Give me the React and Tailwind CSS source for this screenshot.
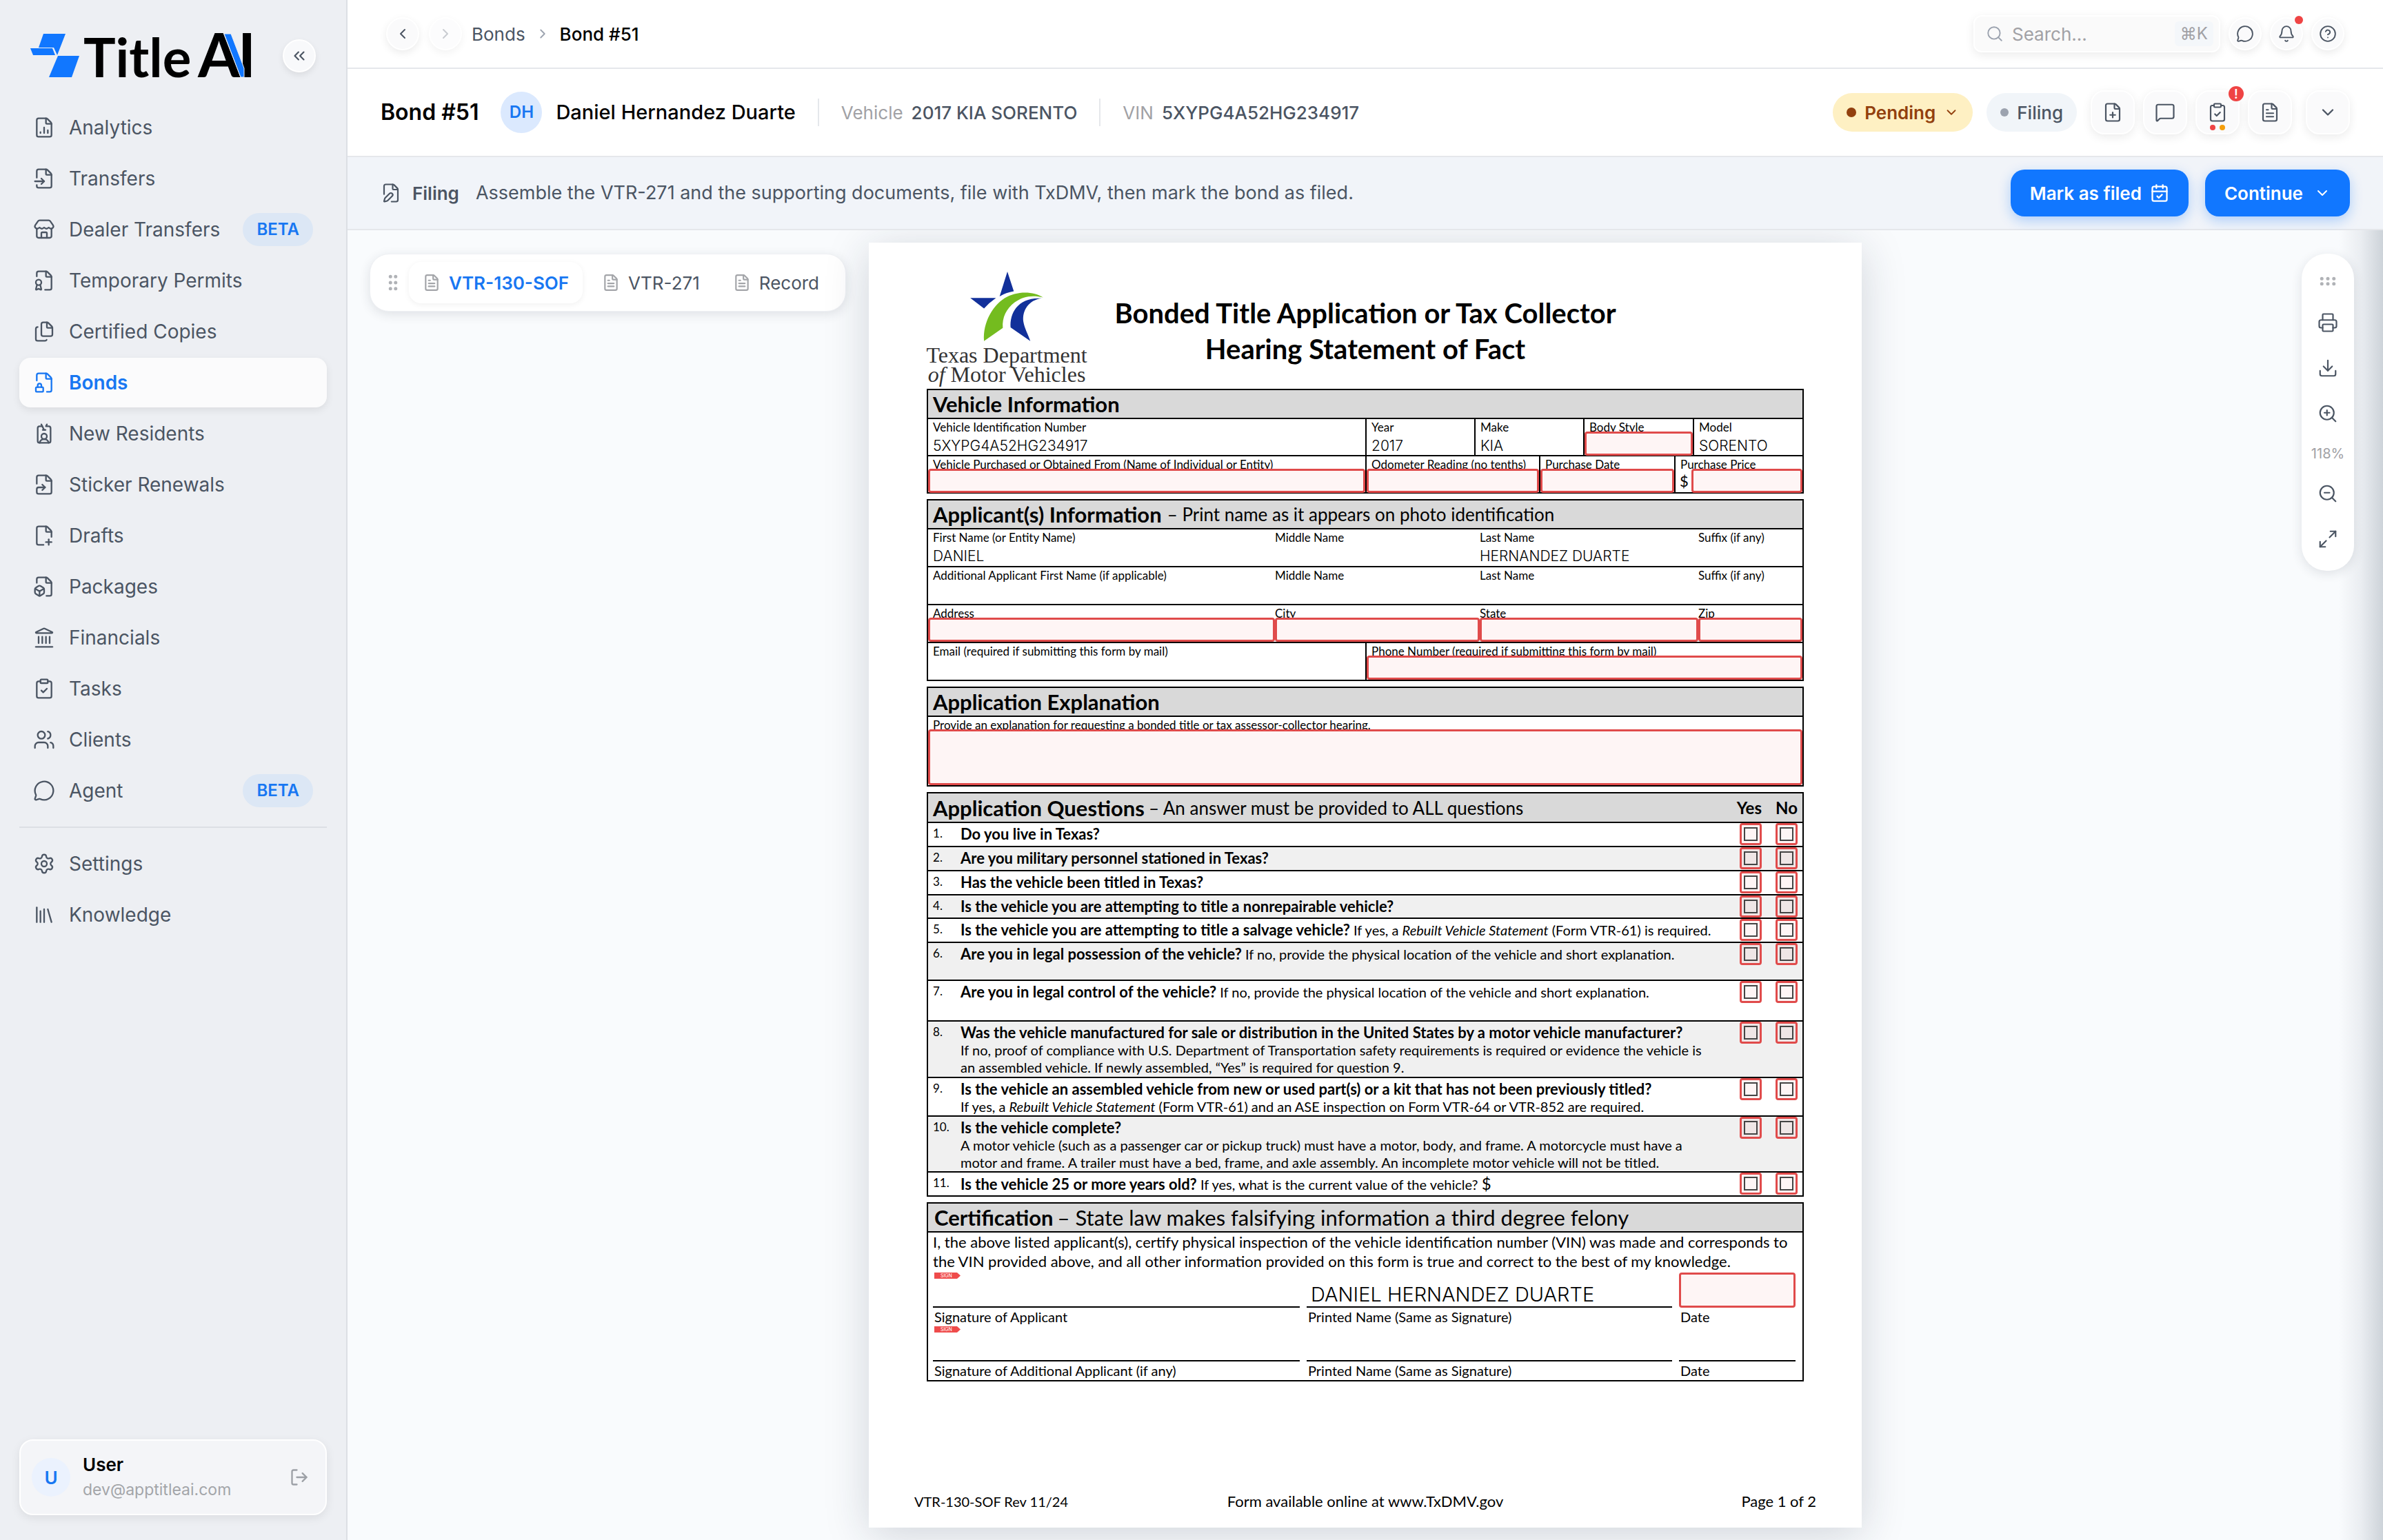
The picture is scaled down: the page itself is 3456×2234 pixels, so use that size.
import React from 'react';
import {
    FileChartColumn, FileInput, Store, FileBadge, Files, FileLock, IdCardLanyard, FileSymlink, FilePlusCorner,
    FileBox, Landmark, ClipboardCheck, Users, MessageCircle, Settings, Library, LogOut, ChevronsLeft,
    ChevronLeft, ChevronRight, ChevronDown, Search, Bell, CircleQuestionMark, FilePlus, MessageSquare, FileText,
    FilePen, CalendarCheck, GripVertical, GripHorizontal, Printer, Download, ZoomIn, ZoomOut, Maximize2,
} from 'lucide-react';

const navItems = [
    { label: 'Analytics', icon: FileChartColumn },
    { label: 'Transfers', icon: FileInput },
    { label: 'Dealer Transfers', icon: Store, beta: true },
    { label: 'Temporary Permits', icon: FileBadge },
    { label: 'Certified Copies', icon: Files },
    { label: 'Bonds', icon: FileLock, active: true },
    { label: 'New Residents', icon: IdCardLanyard },
    { label: 'Sticker Renewals', icon: FileSymlink },
    { label: 'Drafts', icon: FilePlusCorner },
    { label: 'Packages', icon: FileBox },
    { label: 'Financials', icon: Landmark },
    { label: 'Tasks', icon: ClipboardCheck },
    { label: 'Clients', icon: Users },
    { label: 'Agent', icon: MessageCircle, beta: true },
];

const footerItems = [
    { label: 'Settings', icon: Settings },
    { label: 'Knowledge', icon: Library },
];

const questions = [
    { title: 'Do you live in Texas?', height: 'h-[35px]' },
    { title: 'Are you military personnel stationed in Texas?', height: 'h-[35px]' },
    { title: 'Has the vehicle been titled in Texas?', height: 'h-[35px]' },
    { title: 'Is the vehicle you are attempting to title a nonrepairable vehicle?', height: 'h-[34px]' },
    {
        title: 'Is the vehicle you are attempting to title a salvage vehicle?',
        note: <>If yes, a <em>Rebuilt Vehicle Statement</em> (Form VTR-61) is required.</>,
        height: 'h-[35px]',
    },
    {
        title: 'Are you in legal possession of the vehicle?',
        note: 'If no, provide the physical location of the vehicle and short explanation.',
        height: 'h-[55px]',
    },
    {
        title: 'Are you in legal control of the vehicle?',
        note: 'If no, provide the physical location of the vehicle and short explanation.',
        height: 'h-[59px]',
    },
    {
        title: 'Was the vehicle manufactured for sale or distribution in the United States by a motor vehicle manufacturer?',
        lines: [
            'If no, proof of compliance with U.S. Department of Transportation safety requirements is required or evidence the vehicle is',
            'an assembled vehicle. If newly assembled, “Yes” is required for question 9.',
        ],
        height: 'h-[82px]',
    },
    {
        title: 'Is the vehicle an assembled vehicle from new or used part(s) or a kit that has not been previously titled?',
        lines: [<>If yes, a <em>Rebuilt Vehicle Statement</em> (Form VTR-61) and an ASE inspection on Form VTR-64 or VTR-852 are required.</>],
        height: 'h-[56px]',
    },
    {
        title: 'Is the vehicle complete?',
        lines: [
            'A motor vehicle (such as a passenger car or pickup truck) must have a motor, body, and frame. A motorcycle must have a',
            'motor and frame. A trailer must have a bed, frame, and axle assembly. An incomplete motor vehicle will not be titled.',
        ],
        height: 'h-[81px]',
    },
    {
        title: 'Is the vehicle 25 or more years old?',
        note: <>If yes, what is the current value of the vehicle? <span className="text-[24px]">$</span></>,
        height: 'h-[35px]',
    },
];

function Logo() {
    return (
        <svg viewBox="0 0 322 64" className="h-16 w-[322px] overflow-visible" role="img" aria-label="Title AI">
            <g fill="#1177ff">
                <path d="M19 0H51L39 31L34 20H12Z" />
                <path d="M0 21H32L36 31H4Z" />
                <path d="M40 32H71L60 63H27Z" />
            </g>
            <g fontFamily="Lato, sans-serif" fontWeight="700" fill="#000">
                <text x="77" y="63" fontSize="78">Title</text>
                <text x="243" y="63" fontSize="88">A</text>
                <text x="301" y="63" fontSize="88">I</text>
            </g>
            <path d="M281 0H291L310 50V63H305Z" fill="#1177ff" stroke="#edeff3" strokeWidth="1" />
        </svg>
    );
}

function NavItem({ label, icon: Icon, active, beta }) {
    return (
        <a
            href="#"
            className={
                active
                    ? 'flex h-[72px] items-center gap-5 rounded-2xl bg-[#fbfbfc] px-5 font-semibold text-[#1877f2] shadow-[0_4px_12px_rgba(0,0,0,0.08)]'
                    : 'flex h-[72px] items-center gap-5 rounded-2xl px-5 text-[#4b5563]'
            }
        >
            <Icon size={32} strokeWidth={1.75} className="shrink-0" />
            <span className="flex-1">{label}</span>
            {beta && (
                <span className="flex h-12 items-center rounded-full bg-[#dce7f5] px-5 text-[24px] font-semibold text-[#1877f2]">BETA</span>
            )}
        </a>
    );
}

function Sidebar() {
    return (
        <aside className="flex w-[504px] shrink-0 flex-col border-r-2 border-[#dcdfe4] bg-[#edeff3] px-7 pb-9">
            <div className="flex h-[149px] items-center justify-between px-4 pt-3">
                <Logo />
                <button aria-label="Collapse sidebar" className="flex size-12 items-center justify-center rounded-full border-2 border-white bg-[#f8f9fb] text-[#4b5563] shadow-[0_4px_10px_rgba(0,0,0,0.08)]">
                    <ChevronsLeft size={26} strokeWidth={2} />
                </button>
            </div>
            <nav className="flex flex-col gap-[2px] text-[28px]">
                {navItems.map((item) => <NavItem key={item.label} {...item} />)}
                <hr className="my-[14px] border-t-2 border-[#dcdfe4]" />
                {footerItems.map((item) => <NavItem key={item.label} {...item} />)}
            </nav>
            <div className="mt-auto flex h-[110px] items-center gap-[18px] rounded-[20px] border-2 border-white bg-[#f4f5f8] pr-6 pl-4 shadow-[0_4px_14px_rgba(0,0,0,0.08)]">
                <div className="flex size-14 items-center justify-center rounded-full bg-[#ebf2fe] text-[26px] font-semibold text-[#1877f2]">U</div>
                <div className="flex-1">
                    <p className="text-[26px] leading-9 font-semibold text-black">User</p>
                    <p className="text-[23px] leading-9 text-[#a3a5a9]">dev@apptitleai.com</p>
                </div>
                <button aria-label="Log out" className="text-[#9ca0a6]">
                    <LogOut size={28} strokeWidth={2} />
                </button>
            </div>
        </aside>
    );
}

function RoundButton({ label, children, muted }) {
    return (
        <button
            aria-label={label}
            className={
                muted
                    ? 'relative flex size-12 items-center justify-center rounded-full border-2 border-white bg-[#fcfcfd] text-[#c9ccd1] shadow-[0_4px_12px_rgba(0,0,0,0.05)]'
                    : 'relative flex size-12 items-center justify-center rounded-full border-2 border-white bg-[#fafafb] text-[#4b5563] shadow-[0_4px_12px_rgba(0,0,0,0.08)]'
            }
        >
            {children}
        </button>
    );
}

function TopBar() {
    return (
        <div className="flex h-[100px] items-center justify-between border-b-2 border-[#e5e7eb] bg-white px-14">
            <div className="flex items-center gap-[14px] text-[26px]">
                <RoundButton label="Back"><ChevronLeft size={24} /></RoundButton>
                <RoundButton label="Forward" muted><ChevronRight size={24} /></RoundButton>
                <a href="#" className="text-[#4b5563]">Bonds</a>
                <ChevronRight size={22} className="text-[#9ca3af]" />
                <span className="font-medium text-black">Bond #51</span>
            </div>
            <div className="flex items-center gap-3">
                <label className="flex h-[54px] w-[358px] items-center gap-3 rounded-xl border-2 border-white bg-[#fafafa] pr-2 pl-4 shadow-[0_4px_14px_rgba(0,0,0,0.08)]">
                    <Search size={26} strokeWidth={1.75} className="shrink-0 text-[#9ca3af]" />
                    <input type="search" aria-label="Search" placeholder="Search..." className="w-full min-w-0 bg-transparent text-[26px] placeholder:text-[#a1a1a5]" />
                    <kbd className="rounded-md bg-[#f4f7fa] px-2 font-[Inter] text-[24px] text-[#a1a1a5]">⌘K</kbd>
                </label>
                <RoundButton label="Messages"><MessageCircle size={26} strokeWidth={1.75} /></RoundButton>
                <RoundButton label="Notifications">
                    <Bell size={26} strokeWidth={1.75} />
                    <span className="absolute -top-1 -right-0.5 size-3 rounded-full bg-[#ef4444]" />
                </RoundButton>
                <RoundButton label="Help"><CircleQuestionMark size={26} strokeWidth={1.75} /></RoundButton>
            </div>
        </div>
    );
}

function SquareButton({ label, children }) {
    return (
        <button aria-label={label} className="relative flex size-16 items-center justify-center rounded-[20px] border-2 border-white bg-[#fafafb] text-[#4b5563] shadow-[0_4px_14px_rgba(0,0,0,0.08)]">
            {children}
        </button>
    );
}

function RecordHeader() {
    return (
        <div className="flex h-32 items-center justify-between border-b-2 border-[#e5e7eb] bg-white px-12">
            <div className="flex items-center gap-8">
                <h1 className="text-[32px] font-semibold text-black">Bond #51</h1>
                <div className="flex items-center gap-5">
                    <span className="flex size-15 items-center justify-center rounded-full bg-[#dbe9fe] text-[24px] font-semibold text-[#1877f2]">DH</span>
                    <span className="text-[29px] font-medium text-black">Daniel Hernandez Duarte</span>
                </div>
                <div className="h-10 w-[2px] bg-[#e5e7eb]" />
                <p className="flex gap-3 text-[26px] text-[#a1a1a5]">Vehicle <span className="font-medium text-[#4b5563]">2017 KIA SORENTO</span></p>
                <div className="h-10 w-[2px] bg-[#e5e7eb]" />
                <p className="flex gap-3 text-[26px] text-[#a1a1a5]">VIN <span className="font-medium text-[#4b5563]">5XYPG4A52HG234917</span></p>
            </div>
            <div className="flex items-center gap-5">
                <button className="flex h-14 items-center gap-3 rounded-full bg-[#fef0c3] px-5 text-[26px] font-semibold text-[#92400e]">
                    <span className="size-[14px] rounded-full bg-[#92400e]" />
                    Pending
                    <ChevronDown size={22} />
                </button>
                <span className="flex h-14 items-center gap-3 rounded-full bg-[#f1f5f9] px-5 text-[26px] font-medium text-[#4b5563]">
                    <span className="size-3 rounded-full bg-[#9ca3af]" />
                    Filing
                </span>
                <div className="flex gap-3">
                    <SquareButton label="Add file"><FilePlus size={30} strokeWidth={1.75} /></SquareButton>
                    <SquareButton label="Comments"><MessageSquare size={30} strokeWidth={1.75} /></SquareButton>
                    <SquareButton label="Tasks">
                        <ClipboardCheck size={30} strokeWidth={1.75} />
                        <span className="absolute -top-2 -right-2 flex size-[22px] items-center justify-center rounded-full bg-[#ef4444] text-[18px] font-semibold text-white">!</span>
                        <span className="absolute bottom-1 flex gap-[6px]">
                            <span className="size-2 rounded-full bg-[#ef4444]" />
                            <span className="size-2 rounded-full bg-[#f59e0b]" />
                        </span>
                    </SquareButton>
                    <SquareButton label="Notes"><FileText size={30} strokeWidth={1.75} /></SquareButton>
                </div>
                <SquareButton label="More"><ChevronDown size={28} /></SquareButton>
            </div>
        </div>
    );
}

function StageBar() {
    return (
        <div className="flex h-[106px] items-center justify-between border-b-2 border-[#e5e7eb] bg-[#f1f4f9] px-12 text-[26px]">
            <div className="flex items-center text-[#4b5563]">
                <FilePen size={30} strokeWidth={1.75} />
                <span className="ml-4 font-semibold">Filing</span>
                <span className="ml-6 text-[27px]">Assemble the VTR-271 and the supporting documents, file with TxDMV, then mark the bond as filed.</span>
            </div>
            <div className="flex gap-6 font-semibold text-white">
                <button className="flex h-[68px] items-center gap-3 rounded-[20px] bg-[#1177ff] px-7 shadow-[0_6px_18px_rgba(17,119,255,0.3)]">
                    Mark as filed
                    <CalendarCheck size={28} />
                </button>
                <button className="flex h-[68px] items-center gap-4 rounded-[20px] bg-[#1177ff] px-7 shadow-[0_6px_18px_rgba(17,119,255,0.3)]">
                    Continue
                    <ChevronDown size={24} />
                </button>
            </div>
        </div>
    );
}

function DocumentTabs() {
    return (
        <div className="flex h-[84px] items-center gap-2 rounded-[28px] border border-[#eef0f4] bg-white pr-[18px] pl-[18px] text-[26px] text-[#4b5563] shadow-[0_4px_16px_rgba(30,41,59,0.12)]">
            <GripVertical size={30} className="text-[#b0b2b6]" />
            <button className="flex h-[60px] items-center gap-3 rounded-[18px] bg-white px-5 font-semibold text-[#1877f2] shadow-[0_2px_8px_rgba(0,0,0,0.06)]">
                <FileText size={26} className="text-[#a3a5a9]" />
                VTR-130-SOF
            </button>
            <button className="flex h-[60px] items-center gap-3 px-5">
                <FileText size={26} className="text-[#a3a5a9]" />
                VTR-271
            </button>
            <button className="flex h-[60px] items-center gap-3 px-5">
                <FileText size={26} className="text-[#a3a5a9]" />
                Record
            </button>
        </div>
    );
}

function ToolButton({ label, icon: Icon }) {
    return (
        <button aria-label={label} className="flex size-14 items-center justify-center">
            <Icon size={30} strokeWidth={1.75} />
        </button>
    );
}

function ViewerTools() {
    return (
        <div className="flex w-[76px] flex-col items-center gap-[10px] rounded-[36px] bg-white py-[18px] text-[#4b5563] shadow-[0_4px_16px_rgba(30,41,59,0.12)]">
            <div className="flex h-11 items-center">
                <GripHorizontal size={30} className="text-[#b0b2b6]" />
            </div>
            <ToolButton label="Print" icon={Printer} />
            <ToolButton label="Download" icon={Download} />
            <ToolButton label="Zoom in" icon={ZoomIn} />
            <span className="flex h-10 items-center text-[20px] text-[#a1a1a5]">118%</span>
            <ToolButton label="Zoom out" icon={ZoomOut} />
            <ToolButton label="Full screen" icon={Maximize2} />
        </div>
    );
}

function Field({ label, value, required, flush, divider }) {
    return (
        <label className={divider ? 'flex min-w-0 flex-col border-l-2 border-black pt-[2px]' : 'flex min-w-0 flex-col pt-[2px]'}>
            <span className={flush ? 'h-4 leading-5 whitespace-nowrap' : 'h-4 pl-[7px] leading-5 whitespace-nowrap'}>{label}</span>
            <input
                type="text"
                defaultValue={value}
                className={
                    required
                        ? 'mt-auto h-[35px] w-full min-w-0 rounded-[4px] border-3 border-[#e04b4b] bg-[#ef4444]/5'
                        : flush
                            ? 'mt-auto h-[28px] w-full min-w-0 font-[Inter] text-[21px] font-light'
                            : 'mt-auto h-[28px] w-full min-w-0 pl-[7px] font-[Inter] text-[21px] font-light'
                }
            />
        </label>
    );
}

function SectionTitle({ title, note }) {
    return (
        <h3 className="flex h-[42px] items-center gap-2 border-b-2 border-black bg-[#d9d9d9] pl-[7px] text-[26px] whitespace-nowrap">
            <strong className="text-[31px]">{title}</strong>
            {note}
        </h3>
    );
}

function AnswerBox({ label }) {
    return (
        <span className="inline-flex size-8 items-center justify-center rounded-[4px] border-3 border-[#e04b4b] bg-[#ef4444]/5 align-top">
            <input type="checkbox" aria-label={label} className="size-5 appearance-none border-2 border-[#444]" />
        </span>
    );
}

function Questions() {
    return (
        <table className="w-full border-collapse border-2 border-black text-left">
            <thead>
                <tr className="h-[43px] border-b-2 border-black bg-[#d9d9d9] text-[24px] leading-8">
                    <th colSpan={2} className="pl-[7px] font-normal">
                        <span className="flex items-center gap-[6px] text-[26px] whitespace-nowrap">
                            <strong className="text-[31px]">Application Questions</strong>
                            – An answer must be provided to ALL questions
                        </span>
                    </th>
                    <th className="w-[52px] text-right">Yes</th>
                    <th className="w-[60px] pr-[7px] text-right">No</th>
                </tr>
            </thead>
            <tbody>
                {questions.map(({ title, note, lines, height }, i) => (
                    <tr key={title} className={i % 2 ? 'border-b-2 border-black bg-[#f0f0f0]' : 'border-b-2 border-black'}>
                        <td className={`w-[48px] pl-[7px] align-top text-[17px] leading-[30px] ${height}`}>{i + 1}.</td>
                        <td className="align-top text-[20px] leading-[25px] whitespace-nowrap">
                            <p className="pt-[3px]"><strong className="text-[22px]">{title}</strong> {note}</p>
                            {lines && lines.map((line, n) => <p key={n}>{line}</p>)}
                        </td>
                        <td className="text-right align-top leading-none"><AnswerBox label={`Question ${i + 1}: yes`} /></td>
                        <td className="pr-[7px] text-right align-top leading-none"><AnswerBox label={`Question ${i + 1}: no`} /></td>
                    </tr>
                ))}
            </tbody>
        </table>
    );
}

function SignTag() {
    return (
        <svg viewBox="0 0 38 9" className="h-[9px] w-[38px]" role="img" aria-label="Sign here">
            <path d="M0 0H33L38 4.5L33 9H0Z" fill="#ef4b4b" />
            <text x="9" y="7" fontSize="7" fontFamily="Inter, sans-serif" fill="#fff">SIGN</text>
        </svg>
    );
}

function SignatureRow({ label, name, date }) {
    return (
        <div className="grid grid-cols-[532fr_530fr_169fr] gap-x-[10px] pr-[10px] pl-[7px]">
            <div className="flex h-[51px] items-start border-b-2 border-black pl-[2px]"><SignTag /></div>
            <input type="text" aria-label="Printed name" defaultValue={name} className="h-[51px] w-full min-w-0 border-b-2 border-black pt-[14px] pl-[6px] font-[Inter] text-[29px] font-light" />
            <input
                type="text"
                aria-label="Date"
                className={date ? 'h-[51px] w-full min-w-0 rounded-[4px] border-3 border-[#e04b4b] bg-[#ef4444]/5' : 'h-[51px] w-full min-w-0 border-b-2 border-black'}
            />
            <span className="pl-[2px]">{label}</span>
            <span className="pl-[2px]">Printed Name (Same as Signature)</span>
            <span className="pl-[2px]">Date</span>
        </div>
    );
}

function AgencyLogo() {
    return (
        <div className="flex flex-col items-center pt-[42px] font-['Liberation_Serif',serif] text-[32px] leading-7 whitespace-nowrap text-[#333]">
            <svg viewBox="230 42 318 304" className="mb-[6px] h-[101px] w-[106px]" aria-hidden="true">
                <g fill="#12309a">
                    <path d="M392 42L420 128Q386 134 358 150Z" />
                    <path d="M230 157H342Q312 178 290 203Z" />
                    <path d="M542 159C484 166 455 214 462 262C467 290 482 316 492 345L406 286C401 222 440 152 542 159Z" />
                </g>
                <path d="M290 345C284 262 330 190 380 158C430 126 506 126 548 155C500 142 456 152 424 176C388 203 368 242 372 288Z" fill="#74bc1f" />
            </svg>
            <p>Texas Department</p>
            <p><em>of</em> Motor Vehicles</p>
        </div>
    );
}

function FormPage() {
    return (
        <article className="flex min-h-[1864px] w-[1440px] flex-col bg-white font-[Lato] text-[17px] text-black shadow-[0_10px_60px_rgba(30,41,59,0.18)]">
            <header className="grid h-[212px] grid-cols-[232px_1fr_232px] px-21">
                <AgencyLogo />
                <h2 className="pt-[76px] text-center text-[40px] leading-[52px] font-bold">
                    Bonded Title Application or Tax Collector<br />Hearing Statement of Fact
                </h2>
            </header>
            <div className="flex flex-col gap-2 px-21">
                <section className="border-2 border-black">
                    <SectionTitle title="Vehicle Information" />
                    <div className="grid h-[54px] grid-cols-[634fr_158fr_158fr_159fr_159fr] border-b-2 border-black">
                        <Field label="Vehicle Identification Number" value="5XYPG4A52HG234917" />
                        <Field label="Year" value="2017" divider />
                        <Field label="Make" value="KIA" divider />
                        <Field label="Body Style" required divider />
                        <Field label="Model" value="SORENTO" divider />
                    </div>
                    <div className="grid h-[52px] grid-cols-[634fr_252fr_196fr_186fr]">
                        <Field label="Vehicle Purchased or Obtained From (Name of Individual or Entity)" required />
                        <Field label="Odometer Reading (no tenths)" required divider />
                        <Field label="Purchase Date" required divider />
                        <label className="flex flex-col border-l-2 border-black pt-[2px]">
                            <span className="h-4 pl-[7px] leading-5">Purchase Price</span>
                            <span className="mt-auto flex items-center gap-1 pl-[6px] text-[22px]">
                                $
                                <input type="text" className="h-[35px] w-full min-w-0 rounded-[4px] border-3 border-[#e04b4b] bg-[#ef4444]/5" />
                            </span>
                        </label>
                    </div>
                </section>
                <section className="border-2 border-black">
                    <SectionTitle title="Applicant(s) Information" note="– Print name as it appears on photo identification" />
                    <div className="grid h-[55px] grid-cols-[503fr_297fr_317fr_151fr] border-b-2 border-black">
                        <Field label="First Name (or Entity Name)" value="DANIEL" />
                        <Field label="Middle Name" flush />
                        <Field label="Last Name" value="HERNANDEZ DUARTE" flush />
                        <Field label="Suffix (if any)" flush />
                    </div>
                    <div className="grid h-[55px] grid-cols-[503fr_297fr_317fr_151fr] border-b-2 border-black">
                        <Field label="Additional Applicant First Name (if applicable)" />
                        <Field label="Middle Name" flush />
                        <Field label="Last Name" flush />
                        <Field label="Suffix (if any)" flush />
                    </div>
                    <div className="grid h-[55px] grid-cols-[503fr_297fr_317fr_151fr] border-b-2 border-black">
                        <Field label="Address" required />
                        <Field label="City" required flush />
                        <Field label="State" required flush />
                        <Field label="Zip" required flush />
                    </div>
                    <div className="grid h-[53px] grid-cols-[634fr_634fr]">
                        <Field label="Email (required if submitting this form by mail)" />
                        <Field label="Phone Number (required if submitting this form by mail)" required divider />
                    </div>
                </section>
                <section className="border-2 border-black">
                    <SectionTitle title="Application Explanation" />
                    <label className="flex h-[99px] flex-col pt-[2px]">
                        <span className="h-4 pl-[7px] leading-5">Provide an explanation for requesting a bonded title or tax assessor-collector hearing.</span>
                        <textarea className="min-h-0 w-full flex-1 resize-none rounded-[4px] border-3 border-[#e04b4b] bg-[#ef4444]/5" />
                    </label>
                </section>
                <Questions />
                <section className="border-2 border-black">
                    <h3 className="flex h-[42px] items-center gap-[6px] border-b-2 border-black bg-[#d9d9d9] pl-[9px] text-[31px] whitespace-nowrap">
                        <strong>Certification</strong> – State law makes falsifying information a third degree felony
                    </h3>
                    <p className="h-[58px] pl-[7px] text-[22px] leading-7 whitespace-nowrap">
                        I, the above listed applicant(s), certify physical inspection of the vehicle identification number (VIN) was made and corresponds to<br />
                        the VIN provided above, and all other information provided on this form is true and correct to the best of my knowledge.
                    </p>
                    <div className="flex flex-col text-[20px] leading-[27px]">
                        <SignatureRow label="Signature of Applicant" name="DANIEL HERNANDEZ DUARTE" date />
                        <SignatureRow label="Signature of Additional Applicant (if any)" />
                    </div>
                </section>
            </div>
            <footer className="mt-auto grid grid-cols-3 px-[66px] pb-6 text-[22px] leading-7">
                <span className="text-[20px]">VTR-130-SOF Rev 11/24</span>
                <span className="text-center">Form available online at www.TxDMV.gov</span>
                <span className="text-right">Page 1 of 2</span>
            </footer>
        </article>
    );
}

export default function App() {
    return (
        <div className="flex min-h-screen bg-white font-[Inter]">
            <Sidebar />
            <main className="flex min-w-0 flex-1 flex-col">
                <TopBar />
                <RecordHeader />
                <StageBar />
                <div className="relative grid flex-1 grid-cols-[1fr_auto_1fr] items-start overflow-hidden bg-[#f9fbfd] py-[18px]">
                    <div className="absolute inset-y-0 right-0 w-16 bg-gradient-to-r from-[#f9fbfd] via-[#eaedf1] to-[#cdd3d9]" />
                    <div className="flex pt-4 pl-8">
                        <DocumentTabs />
                    </div>
                    <FormPage />
                    <div className="relative flex justify-end pt-4 pr-[42px]">
                        <ViewerTools />
                    </div>
                </div>
            </main>
        </div>
    );
}
